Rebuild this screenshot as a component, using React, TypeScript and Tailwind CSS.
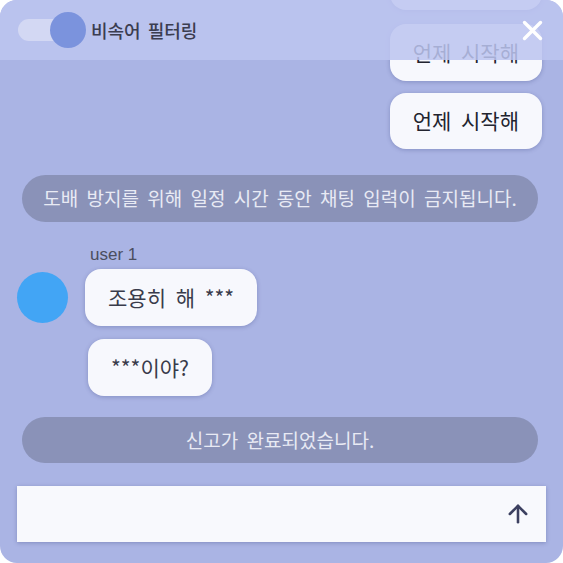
import React from 'react'
import { ArrowUp } from 'lucide-react'

const kr = "font-['Noto_Sans_CJK_KR','Noto_Sans',sans-serif]"

const Bubble: React.FC<{ text: string; className?: string }> = ({ text, className = '' }) => (
  <div
    className={`flex items-center rounded-[16px] bg-[#f7f8fd] px-[23px] text-[21px] [word-spacing:5px] shadow-[0_1px_4px_rgba(40,50,110,0.28)] ${className}`}
  >
    {text}
  </div>
)

const SystemNotice: React.FC<{ text: string; className?: string }> = ({ text, className = '' }) => (
  <div
    className={`ml-[22px] mr-[25px] flex items-center justify-center rounded-full bg-[#8a92b8] text-[19px] text-[#e8eaf4] [word-spacing:4px] ${className}`}
  >
    {text}
  </div>
)

export default function App() {
  return (
    <div className={`h-[563px] w-[563px] bg-white ${kr}`}>
      <div className="relative flex h-[563px] w-[563px] flex-col overflow-hidden rounded-[17px] bg-[#aab4e4]">
        {/* message list, scrolled to the bottom */}
        <div className="flex min-h-0 flex-1 flex-col justify-end overflow-hidden pb-[23px]">
          <div className="flex shrink-0 flex-col items-end pr-[21px]">
            <Bubble text="언제 시작해" className="h-[56px] shrink-0 text-[#22242f]" />
            <Bubble text="언제 시작해" className="mt-[14px] h-[57px] shrink-0 text-[#22242f]" />
            <Bubble text="언제 시작해" className="mt-[12px] h-[56px] shrink-0 text-[#22242f]" />
          </div>

          <SystemNotice
            text="도배 방지를 위해 일정 시간 동안 채팅 입력이 금지됩니다."
            className="mt-[26px] h-[47px] shrink-0"
          />

          <div className="mt-[23px] ml-[90px] h-[20px] shrink-0 font-['Liberation_Sans',sans-serif] text-[17px] leading-[20px] text-[#4b4e60]">
            user 1
          </div>
          <div className="mt-[4px] flex shrink-0 items-center">
            <div className="ml-[17px] h-[51px] w-[51px] shrink-0 rounded-full bg-[#42a5f5]" />
            <Bubble text="조용히 해 ***" className="ml-[17px] h-[57px] text-[#393b4b]" />
          </div>
          <div className="mt-[13px] flex shrink-0">
            <Bubble text="***이야?" className="ml-[88px] h-[57px] text-[#393b4b]" />
          </div>

          <SystemNotice text="신고가 완료되었습니다." className="mt-[21px] h-[46px] shrink-0" />
        </div>

        {/* input */}
        <div className="mx-[17px] mb-[21px] flex h-[56px] shrink-0 items-center justify-end bg-[#f8f9fd] pr-[14px] shadow-[0_1px_4px_rgba(40,50,110,0.3)]">
          <ArrowUp className="h-[28px] w-[28px] text-[#3c4060]" strokeWidth={2.2} />
        </div>

        {/* header overlay */}
        <div className="absolute inset-x-0 top-0 flex h-[60px] items-center bg-[rgba(189,197,240,0.86)]">
          <div className="relative ml-[18px] h-[22px] w-[56px]">
            <div className="absolute inset-0 rounded-full bg-[#d3d8f3]" />
            <div className="absolute left-[32px] top-[-7px] h-[36px] w-[36px] rounded-full bg-[#7b93dd]" />
          </div>
          <span className="ml-[17px] text-[18px] font-medium text-[#3b3d50] [word-spacing:3px]">비속어 필터링</span>
          <svg
            className="absolute right-[20px] top-[20px]"
            width="21"
            height="21"
            viewBox="0 0 21 21"
            fill="none"
            stroke="white"
            strokeWidth="3.4"
            strokeLinecap="round"
          >
            <path d="M2.5 2.5 L18.5 18.5 M18.5 2.5 L2.5 18.5" />
          </svg>
        </div>
      </div>
    </div>
  )
}
